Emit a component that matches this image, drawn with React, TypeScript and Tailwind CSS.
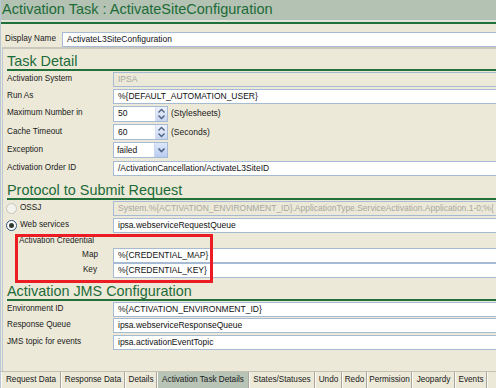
import React from "react";

const Field = ({
  children,
  disabled,
}: {
  children?: React.ReactNode;
  disabled?: boolean;
}) => (
  <div
    className={
      "flex-1 h-[15px] border border-r-0 border-[#a7bad3] pl-[4px] flex items-center text-[8.5px] whitespace-nowrap overflow-hidden " +
      (disabled ? "bg-[#ece9d8] text-[#a7a7a2]" : "bg-white text-[#111]")
    }
  >
    {children}
  </div>
);

const Label = ({ children }: { children: React.ReactNode }) => (
  <div className="w-[110px] shrink-0 pl-[4px] text-[8.2px] text-[#1a1a1a] whitespace-nowrap">
    {children}
  </div>
);

const Row = ({
  h,
  label,
  children,
}: {
  h: string;
  label: React.ReactNode;
  children: React.ReactNode;
}) => (
  <div className={h + " flex items-center"}>
    {label}
    {children}
  </div>
);

const Header = ({ title, h }: { title: string; h: string }) => (
  <>
    <div
      className={
        h +
        " flex items-end pl-[4px] text-[14.4px] leading-[15px] text-[#1d6b39] whitespace-nowrap"
      }
    >
      {title}
    </div>
    <div className="h-[2px] ml-[4px] bg-[#23713a]" />
  </>
);

const Spinner = ({ value, unit }: { value: string; unit: string }) => (
  <div className="flex items-center">
    <div className="w-[55px] h-[16px] flex border border-[#a7bad3] bg-white">
      <div className="flex-1 pl-[4px] flex items-center text-[8.5px] text-[#111]">
        {value}
      </div>
      <div className="w-[12px] h-full bg-gradient-to-b from-[#eef3fc] to-[#c8d5ef] border-l border-[#d4dff2]">
        <svg width="11" height="14" viewBox="0 0 11 14">
          <path d="M2.5 5.5 L5.5 2.5 L8.5 5.5" fill="none" stroke="#4d6185" strokeWidth="1.4" />
          <path d="M2.5 8.5 L5.5 11.5 L8.5 8.5" fill="none" stroke="#4d6185" strokeWidth="1.4" />
        </svg>
      </div>
    </div>
    <span className="ml-[3px] text-[8.5px] text-[#1a1a1a]">{unit}</span>
  </div>
);

const Select = ({ value }: { value: string }) => (
  <div className="w-[55px] h-[16px] flex border border-[#a7bad3] bg-white">
    <div className="flex-1 pl-[3px] flex items-center text-[8.5px] text-[#111]">
      {value}
    </div>
    <div className="w-[13px] h-full bg-gradient-to-b from-[#dde7fb] to-[#b9cbf0] border-l border-[#c9d6f0] flex items-center justify-center">
      <svg width="9" height="8" viewBox="0 0 9 8">
        <path d="M1.5 2.5 L4.5 5.5 L7.5 2.5" fill="none" stroke="#4d6185" strokeWidth="1.6" />
      </svg>
    </div>
  </div>
);

const Radio = ({ checked, disabled }: { checked?: boolean; disabled?: boolean }) => (
  <span
    className={
      "w-[11px] h-[11px] rounded-full border flex items-center justify-center shrink-0 " +
      (disabled ? "border-[#c8c6bc] bg-[#f3f2ec]" : "border-[#2b4f7c] bg-white")
    }
  >
    {checked && <span className="w-[5px] h-[5px] rounded-full bg-[#2e3a30]" />}
  </span>
);

const tabs: { name: string; w: string; active?: boolean }[] = [
  { name: "Request Data", w: "w-[60px]" },
  { name: "Response Data", w: "w-[64px]" },
  { name: "Details", w: "w-[32px]" },
  { name: "Activation Task Details", w: "w-[92px]", active: true },
  { name: "States/Statuses", w: "w-[66px]" },
  { name: "Undo", w: "w-[27px]" },
  { name: "Redo", w: "w-[25px]" },
  { name: "Permission", w: "w-[45px]" },
  { name: "Jeopardy", w: "w-[43px]" },
  { name: "Events", w: "w-[32px]" },
];

export default function App() {
  return (
    <div className="relative w-[496px] h-[388px] overflow-hidden bg-[#ece9d8] flex flex-col border-l border-[#b9c6d3] font-['Liberation_Sans',Arial,sans-serif]">
      {/* Title */}
      <div className="h-[20px] shrink-0 bg-[#b3c2b2] pl-[1px] text-[14.5px] leading-[19px] text-[#1d6b39] whitespace-nowrap">
        Activation Task : ActivateSiteConfiguration
      </div>
      <div className="h-[2px] shrink-0 bg-[#e2e6da]" />
      <div className="h-[2px] shrink-0 bg-[#23713a]" />
      <div className="h-[8px] shrink-0" />

      {/* Display name */}
      <div className="h-[15px] shrink-0 flex items-center">
        <div className="w-[61px] shrink-0 pl-[4px] text-[8.2px] text-[#1a1a1a] whitespace-nowrap">
          Display Name
        </div>
        <Field>ActivateL3SiteConfiguration</Field>
      </div>

      {/* Panel */}
      <div className="flex-1 flex flex-col ml-[1px] border-t-2 border-t-[#cac8bc] border-l border-l-[#bcc8d4]">
        <Header title="Task Detail" h="h-[20px]" />
        <Row h="h-[17px]" label={<Label>Activation System</Label>}>
          <Field disabled>IPSA</Field>
        </Row>
        <Row h="h-[16px]" label={<Label>Run As</Label>}>
          <Field>%{"{"}DEFAULT_AUTOMATION_USER{"}"}</Field>
        </Row>
        <Row h="h-[19px]" label={<Label>Maximum Number in</Label>}>
          <Spinner value="50" unit="(Stylesheets)" />
        </Row>
        <Row h="h-[18px]" label={<Label>Cache Timeout</Label>}>
          <Spinner value="60" unit="(Seconds)" />
        </Row>
        <Row h="h-[18px]" label={<Label>Exception</Label>}>
          <Select value="failed" />
        </Row>
        <Row h="h-[19px]" label={<Label>Activation Order ID</Label>}>
          <Field>/ActivationCancellation/ActivateL3SiteID</Field>
        </Row>

        <Header title="Protocol to Submit Request" h="h-[20px]" />
        <Row
          h="h-[17px]"
          label={
            <div className="w-[110px] shrink-0 pl-[3px] flex items-center gap-[3px] text-[8.2px] text-[#1a1a1a]">
              <Radio disabled />
              <span>OSSJ</span>
            </div>
          }
        >
          <Field disabled>
            System.%{"{"}ACTIVATION_ENVIRONMENT_ID{"}"}.ApplicationType.ServiceActivation.Application.1-0;%{"{"}
          </Field>
        </Row>
        <Row
          h="h-[17px]"
          label={
            <div className="w-[110px] shrink-0 pl-[3px] flex items-center gap-[3px] text-[8.2px] text-[#1a1a1a]">
              <Radio checked />
              <span>Web services</span>
            </div>
          }
        >
          <Field>ipsa.webserviceRequestQueue</Field>
        </Row>
        <div className="h-[14px] flex items-center pl-[16px] text-[8.2px] text-[#1a1a1a]">
          Activation Credential
        </div>
        <Row
          h="h-[15px]"
          label={
            <div className="w-[110px] shrink-0 pr-[15px] text-right text-[8.2px] text-[#1a1a1a]">
              Map
            </div>
          }
        >
          <Field>%{"{"}CREDENTIAL_MAP{"}"}</Field>
        </Row>
        <Row
          h="h-[15px]"
          label={
            <div className="w-[110px] shrink-0 pr-[16px] text-right text-[8.2px] text-[#1a1a1a]">
              Key
            </div>
          }
        >
          <Field>%{"{"}CREDENTIAL_KEY{"}"}</Field>
        </Row>

        <Header title="Activation JMS Configuration" h="h-[21px]" />
        <Row h="h-[16px]" label={<Label>Environment ID</Label>}>
          <Field>%{"{"}ACTIVATION_ENVIRONMENT_ID{"}"}</Field>
        </Row>
        <Row h="h-[17px]" label={<Label>Response Queue</Label>}>
          <Field>ipsa.webserviceResponseQueue</Field>
        </Row>
        <Row h="h-[16px]" label={<Label>JMS topic for events</Label>}>
          <Field>ipsa.activationEventTopic</Field>
        </Row>
        <div className="flex-1" />
      </div>

      {/* Tabs */}
      <div className="h-[17px] shrink-0 flex border-t border-[#c4c2b6] bg-[#ece9d8]">
        {tabs.map((t) => (
          <div
            key={t.name}
            className={
              t.w +
              " shrink-0 h-full flex items-center justify-center border-r border-[#a9a79d] border-l border-l-[#faf9f4] text-[8.2px] text-[#1a1a1a] whitespace-nowrap " +
              (t.active ? "bg-[#b7c4b6]" : "")
            }
          >
            {t.name}
          </div>
        ))}
        <div className="flex-1 border-l border-l-[#faf9f4]" />
      </div>

      {/* Annotation box */}
      <div className="absolute left-[14px] top-[234px] w-[198px] h-[49px] border-[3px] border-[#ec1c24] pointer-events-none" />
    </div>
  );
}
